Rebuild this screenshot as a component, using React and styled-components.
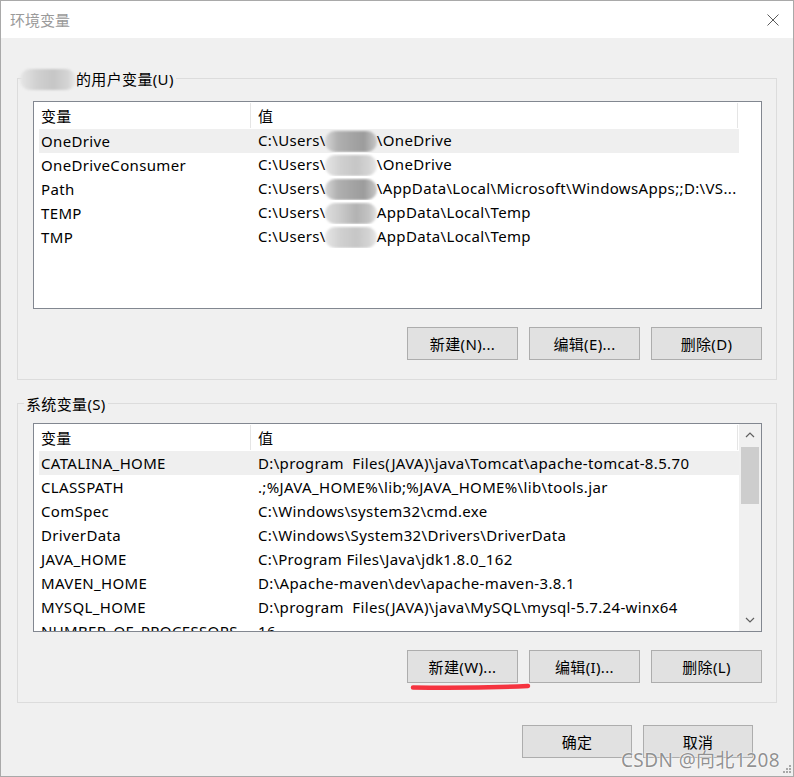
import styled, { createGlobalStyle } from 'styled-components';

const userVars = [
  { name: 'OneDrive', pre: 'C:\\Users\\', blur: 'dark', post: '\\OneDrive', selected: true },
  { name: 'OneDriveConsumer', pre: 'C:\\Users\\', blur: 'light', post: '\\OneDrive' },
  { name: 'Path', pre: 'C:\\Users\\', blur: 'dark', post: '\\AppData\\Local\\Microsoft\\WindowsApps;;D:\\VS...' },
  { name: 'TEMP', pre: 'C:\\Users\\', blur: 'mid', post: 'AppData\\Local\\Temp' },
  { name: 'TMP', pre: 'C:\\Users\\', blur: 'light', post: 'AppData\\Local\\Temp' },
];

const systemVars = [
  { name: 'CATALINA_HOME', pre: 'D:\\program  Files(JAVA)\\java\\Tomcat\\apache-tomcat-8.5.70', selected: true },
  { name: 'CLASSPATH', pre: '.;%JAVA_HOME%\\lib;%JAVA_HOME%\\lib\\tools.jar' },
  { name: 'ComSpec', pre: 'C:\\Windows\\system32\\cmd.exe' },
  { name: 'DriverData', pre: 'C:\\Windows\\System32\\Drivers\\DriverData' },
  { name: 'JAVA_HOME', pre: 'C:\\Program Files\\Java\\jdk1.8.0_162' },
  { name: 'MAVEN_HOME', pre: 'D:\\Apache-maven\\dev\\apache-maven-3.8.1' },
  { name: 'MYSQL_HOME', pre: 'D:\\program  Files(JAVA)\\java\\MySQL\\mysql-5.7.24-winx64' },
  { name: 'NUMBER_OF_PROCESSORS', pre: '16' },
];

export default function App() {
  return (
    <>
      <GlobalStyle />
      <Window>
        <TitleBar>
          <Title>环境变量</Title>
          <CloseIcon width="12" height="12" viewBox="0 0 12 12">
            <path d="M0.5 0.5 L11.5 11.5 M11.5 0.5 L0.5 11.5" stroke="#5a5a5a" strokeWidth="1" />
          </CloseIcon>
        </TitleBar>

        <Body>
          <Group>
            <Caption>
              <Blur $tone="light" $w={56} $ml={-6} />
              的用户变量(U)
            </Caption>
            <VarList rows={userVars} height={208} top={12} />
            <ButtonRow>
              <Button>新建(N)...</Button>
              <Button>编辑(E)...</Button>
              <Button>删除(D)</Button>
            </ButtonRow>
          </Group>

          <Group $top={23}>
            <Caption>系统变量(S)</Caption>
            <VarList rows={systemVars} height={209} top={9} scroll />
            <ButtonRow>
              <Marked>
                <Button>新建(W)...</Button>
                <Underline width="124" height="10" viewBox="0 0 124 10">
                  <path d="M4 5.5 C40 6.2, 85 5.5, 119 4" stroke="#f5333f" strokeWidth="4.5" strokeLinecap="round" fill="none" />
                </Underline>
              </Marked>
              <Button>编辑(I)...</Button>
              <Button>删除(L)</Button>
            </ButtonRow>
          </Group>

          <Footer>
            <Button $w={110}>确定</Button>
            <Button $w={110}>取消</Button>
          </Footer>
        </Body>

        <Watermark>CSDN @向北1208</Watermark>
        <Grip width="9" height="9" viewBox="0 0 9 9">
          {[[7, 1], [4, 4], [7, 4], [1, 7], [4, 7], [7, 7]].map(([x, y]) => (
            <rect key={x + '-' + y} x={x} y={y} width="2" height="2" fill="#a8a8a8" />
          ))}
        </Grip>
      </Window>
    </>
  );
}

function VarList({ rows, height, top, scroll }) {
  return (
    <ListBox style={{ height }} $top={top}>
      <ListMain>
        <Header>
          <HeaderCell $w={217}>变量</HeaderCell>
          <HeaderCell $w={487}>值</HeaderCell>
        </Header>
        <Rows>
          {rows.map((r) => (
            <Row key={r.name} $selected={r.selected}>
              <NameCell>{r.name}</NameCell>
              <ValueCell>
                {r.pre}
                {r.blur && <Blur $tone={r.blur} $w={52} $ml={-1} />}
                {r.post}
              </ValueCell>
            </Row>
          ))}
        </Rows>
      </ListMain>
      {scroll && (
        <ScrollBar>
          <ArrowBox>
            <svg width="10" height="6" viewBox="0 0 10 6">
              <path d="M1 5 L5 1 L9 5" stroke="#606060" strokeWidth="1.2" fill="none" />
            </svg>
          </ArrowBox>
          <Thumb />
          <Track />
          <ArrowBox>
            <svg width="10" height="6" viewBox="0 0 10 6">
              <path d="M1 1 L5 5 L9 1" stroke="#606060" strokeWidth="1.2" fill="none" />
            </svg>
          </ArrowBox>
        </ScrollBar>
      )}
    </ListBox>
  );
}

const GlobalStyle = createGlobalStyle`
  html, body {
    margin: 0;
    padding: 0;
    background: #ffffff;
  }
  body {
    font-family: "Noto Sans", "Noto Sans CJK SC", sans-serif;
    font-size: 15px;
    letter-spacing: 0.35px;
    color: #000;
  }
`;

const Window = styled.div`
  position: relative;
  width: 794px;
  height: 777px;
  box-sizing: border-box;
  border: 1px solid #a9a9a9;
  background: #f0f0f0;
  display: flex;
  flex-direction: column;
  overflow: hidden;
`;

const TitleBar = styled.div`
  height: 37px;
  background: #ffffff;
  display: flex;
  align-items: center;
  justify-content: space-between;
  padding: 0 14px 0 9px;
`;

const Title = styled.span`
  font-size: 15px;
  color: #9a9a9a;
  line-height: 20px;
  letter-spacing: 0;
`;

const CloseIcon = styled.svg`
  display: block;
`;

const Body = styled.div`
  flex: 1;
  display: flex;
  flex-direction: column;
  padding: 40px 16px 0 16px;
`;

const Group = styled.section`
  margin-top: ${(p) => p.$top || 0}px;
  border: 1px solid #dcdcdc;
  display: flex;
  flex-direction: column;
  padding: 0 14px 19px 15px;
`;

const Caption = styled.div`
  align-self: flex-start;
  display: flex;
  align-items: center;
  margin: -10px 0 0 -9px;
  padding: 0 2px;
  height: 20px;
  line-height: 20px;
  background: #f0f0f0;
  font-size: 15px;
`;

const tones = {
  dark: 'linear-gradient(90deg, #d6d6d6 0%, #b0b0b0 25%, #a3a3a3 55%, #9c9c9c 75%, #c9c9c9 100%)',
  mid: 'linear-gradient(90deg, #dedede 0%, #cacaca 30%, #b2b2b2 60%, #c4c4c4 85%, #e4e4e4 100%)',
  light: 'linear-gradient(90deg, #e6e6e6 0%, #d0d0d0 30%, #c6c6c6 60%, #d4d4d4 85%, #eaeaea 100%)',
};

const Blur = styled.span`
  display: inline-block;
  width: ${(p) => p.$w}px;
  height: 21px;
  margin: 0 0 0 ${(p) => p.$ml}px;
  border-radius: 10px;
  background: ${(p) => tones[p.$tone]};
  filter: blur(1px);
  vertical-align: middle;
`;

const ListBox = styled.div`
  margin-top: ${(p) => p.$top}px;
  box-sizing: border-box;
  border: 1px solid #828790;
  background: #ffffff;
  display: flex;
  overflow: hidden;
`;

const ListMain = styled.div`
  flex: 1;
  min-width: 0;
  display: flex;
  flex-direction: column;
`;

const Header = styled.div`
  height: 27px;
  flex-shrink: 0;
  display: flex;
`;

const HeaderCell = styled.div`
  width: ${(p) => p.$w}px;
  box-sizing: border-box;
  margin: 1px 0;
  padding-left: 7px;
  border-right: 1px solid #e5e5e5;
  display: flex;
  align-items: center;
  font-size: 15px;
`;

const Rows = styled.div`
  flex: 1;
  overflow: hidden;
`;

const Row = styled.div`
  margin-left: 5px;
  width: 700px;
  height: 24px;
  display: flex;
  align-items: center;
  background: ${(p) => (p.$selected ? '#efefef' : 'transparent')};
  font-size: 15px;
`;

const NameCell = styled.div`
  width: 212px;
  flex-shrink: 0;
  box-sizing: border-box;
  padding-left: 2px;
  white-space: nowrap;
`;

const ValueCell = styled.div`
  flex: 1;
  min-width: 0;
  padding: 0 0 0 7px;
  white-space: pre;
  overflow: hidden;
  text-overflow: ellipsis;
`;

const ScrollBar = styled.div`
  width: 22px;
  flex-shrink: 0;
  background: #f0f0f0;
  display: flex;
  flex-direction: column;
  align-items: center;
`;

const ArrowBox = styled.div`
  height: 22px;
  width: 100%;
  display: flex;
  align-items: center;
  justify-content: center;
  flex-shrink: 0;
`;

const Thumb = styled.div`
  width: 18px;
  height: 57px;
  margin-top: 1px;
  background: #cdcdcd;
`;

const Track = styled.div`
  flex: 1;
`;

const ButtonRow = styled.div`
  margin-top: 18px;
  display: flex;
  justify-content: flex-end;
  gap: 11px;
`;

const Button = styled.button`
  width: ${(p) => p.$w || 111}px;
  height: 33px;
  box-sizing: border-box;
  border: 1px solid #adadad;
  background: #e1e1e1;
  font-family: "Noto Sans", "Noto Sans CJK SC", sans-serif;
  font-size: 15px;
  letter-spacing: 0.35px;
  color: #000;
  padding: 0;
`;

const Marked = styled.span`
  position: relative;
  display: inline-flex;
`;

const Underline = styled.svg`
  position: absolute;
  left: 2px;
  top: 32px;
`;

const Footer = styled.div`
  margin-top: 22px;
  display: flex;
  justify-content: flex-end;
  gap: 11px;
  padding-right: 24px;
`;

const Watermark = styled.div`
  position: absolute;
  right: 13px;
  bottom: 3px;
  font-size: 19px;
  color: rgba(125, 125, 125, 0.85);
  text-shadow: 0 0 2px #ffffff, 0 0 1px #ffffff;
  letter-spacing: 0.4px;
`;

const Grip = styled.svg`
  position: absolute;
  right: 2px;
  bottom: 3px;
`;
